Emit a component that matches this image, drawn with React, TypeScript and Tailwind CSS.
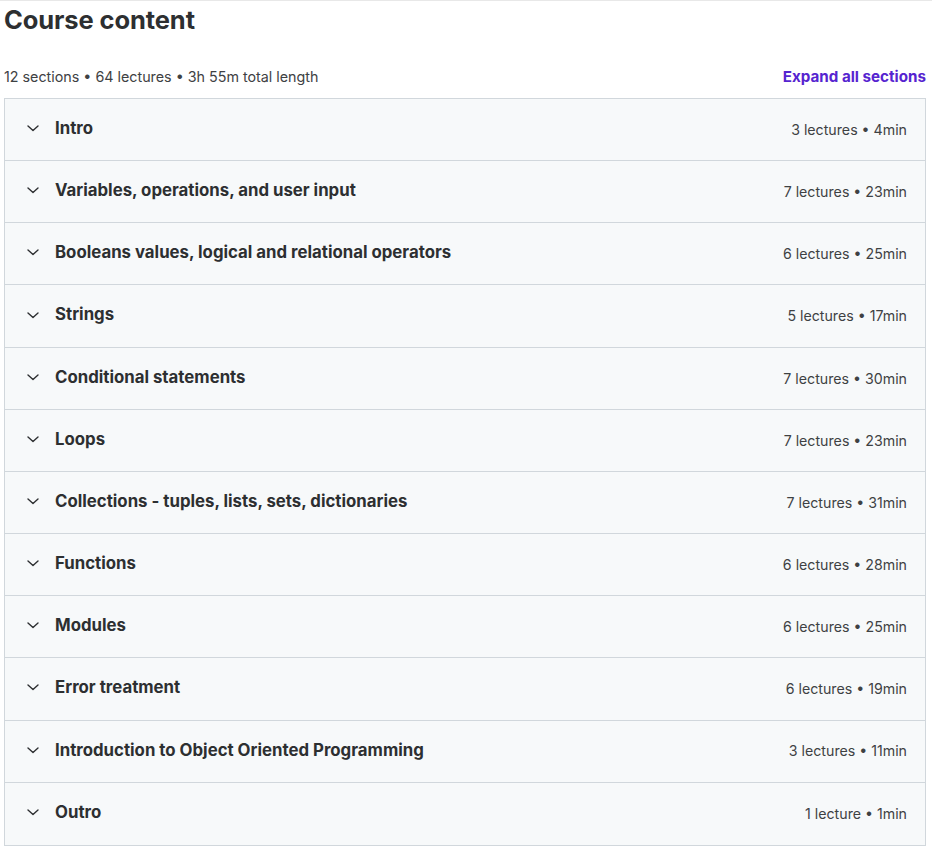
import React from "react";

const sections: [string, string][] = [
  ["Intro", "3 lectures • 4min"],
  ["Variables, operations, and user input", "7 lectures • 23min"],
  ["Booleans values, logical and relational operators", "6 lectures • 25min"],
  ["Strings", "5 lectures • 17min"],
  ["Conditional statements", "7 lectures • 30min"],
  ["Loops", "7 lectures • 23min"],
  ["Collections - tuples, lists, sets, dictionaries", "7 lectures • 31min"],
  ["Functions", "6 lectures • 28min"],
  ["Modules", "6 lectures • 25min"],
  ["Error treatment", "6 lectures • 19min"],
  ["Introduction to Object Oriented Programming", "3 lectures • 11min"],
  ["Outro", "1 lecture • 1min"],
];

export default function App() {
  return (
    <div
      className="w-[932px] h-[849px] bg-white text-[#2d2f31] border-t border-[#e8e8e8] overflow-hidden"
      style={{ fontFamily: "Inter, 'Noto Sans', sans-serif" }}
    >
      <h2 className="pl-[4px] pt-[3px] text-[25.5px] leading-[32px] font-bold tracking-[-0.1px]">
        Course content
      </h2>
      <div className="flex items-center justify-between pl-[4px] pr-[6px] mt-[30px] h-[22px]">
        <span className="text-[14.3px] text-[#3e4143]">
          12 sections • 64 lectures • 3h 55m total length
        </span>
        <span className="text-[15.2px] font-bold text-[#5624d0]">Expand all sections</span>
      </div>
      <div className="ml-[4px] w-[922px] mt-[10px] border border-[#d1d7dc]">
        {sections.map(([t, m], i) => (
          <div
            key={i}
            className={`h-[62.17px] bg-[#f7f9fa] flex items-center pl-[20px] pr-[18px] ${
              i < sections.length - 1 ? "border-b border-[#d1d7dc]" : ""
            }`}
          >
            <svg width="16" height="16" viewBox="0 0 16 16" className="mr-[14px] shrink-0 -mt-[3px]">
              <path d="M3 6 L8 10.5 L13 6" fill="none" stroke="#2d2f31" strokeWidth="1.4" strokeLinecap="round" strokeLinejoin="round" />
            </svg>
            <span className="text-[16.8px] font-bold flex-1 -mt-[2px]">{t}</span>
            <span className="text-[14.2px] text-[#3e4143]">{m}</span>
          </div>
        ))}
      </div>
    </div>
  );
}
